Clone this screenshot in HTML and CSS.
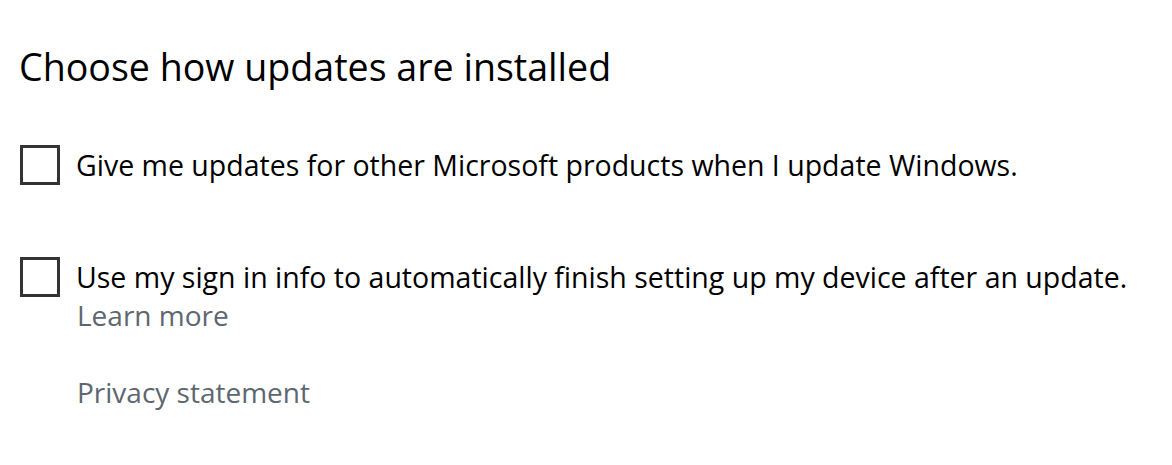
FILE: index.html
```html
<!DOCTYPE html>
<html lang="en">
<head>
    <meta charset="UTF-8">
    <meta name="viewport" content="width=device-width, initial-scale=1.0">
    <title>Windows Update</title>
    <link rel="stylesheet" href="styles.css">
</head>
<body>

<div class="page">
    <!-- Titre -->
    <h1 class="title">Choose how updates are installed</h1>

    <!-- Options -->
    <label class="option first">
        <span class="box"></span>
        <span class="option-text">Give me updates for other Microsoft products when I update Windows.</span>
    </label>

    <label class="option second">
        <span class="box"></span>
        <span class="option-text">Use my sign in info to automatically finish setting up my device after an update.</span>
    </label>
    <a class="link learn" href="#">Learn more</a>

    <a class="link privacy" href="#">Privacy statement</a>
</div>

</body>
</html>
```

FILE: styles.css
```css
body {
    margin: 0;
    padding: 0;
    background-color: #ffffff;
    font-family: "Open Sans", "Noto Sans", Arial, sans-serif;
    color: #000;
}
.page {
    padding: 42px 0 0 19px;
}
.title {
    font-size: 37.6px;
    font-weight: 400;
    margin: 0;
    line-height: 50px;
}
.option {
    display: flex;
    align-items: center;
    gap: 16px;
    font-size: 28.5px;
    line-height: 40px;
}
.option.first {
    margin-top: 53px;
}
.option.second {
    margin-top: 72px;
}
.box {
    width: 34px;
    height: 34px;
    border: 3px solid #333;
    flex-shrink: 0;
    margin-left: 1px;
}
.link {
    display: block;
    color: #5d6770;
    text-decoration: none;
    font-size: 28px;
    line-height: 36px;
    margin-left: 58px;
}
.learn {
    margin-top: 0;
}
.privacy {
    margin-top: 41px;
}
```
